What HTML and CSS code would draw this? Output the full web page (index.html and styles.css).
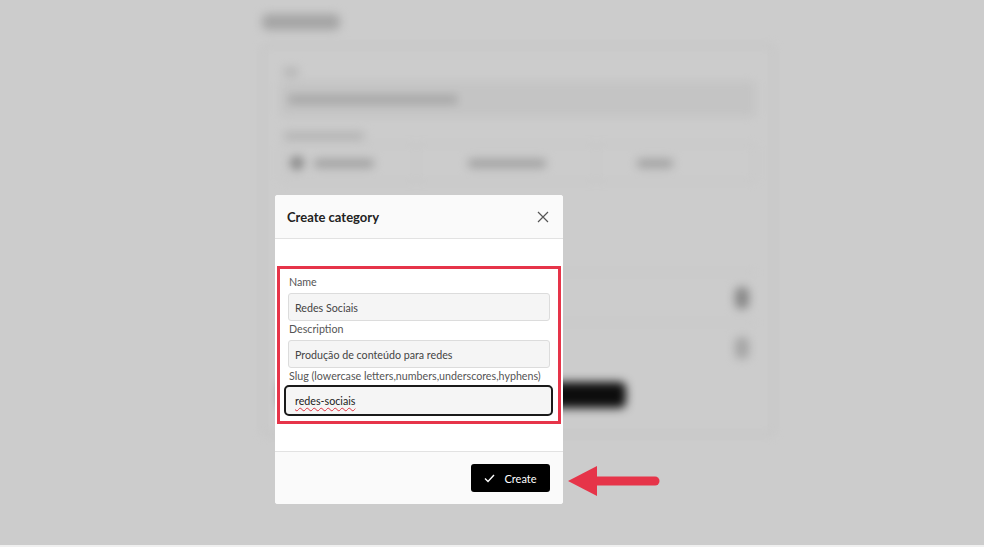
FILE: index.html
```html
<!DOCTYPE html>
<html lang="en">
<head>
    <meta charset="UTF-8">
    <meta name="viewport" content="width=device-width, initial-scale=1.0">
    <title>Create category</title>
    <link rel="stylesheet" href="styles.css">
</head>
<body>
    <!-- page behind the modal (blurred) -->
    <div class="page">
        <div class="page-title"></div>
        <div class="card">
            <div class="small-label"></div>
            <div class="fake-input"><span class="fake-text"></span></div>

            <div class="small-label wide"></div>
            <div class="tabs">
                <div class="tab first"><span class="dot"></span><span class="tab-text"></span></div>
                <div class="tab"><span class="tab-text long"></span></div>
                <div class="tab last"><span class="tab-text short"></span></div>
            </div>

            <div class="rows">
                <div class="row"><span class="row-icon"></span></div>
                <div class="row"><span class="row-icon faint"></span></div>
            </div>

            <div class="dark-btn"></div>
        </div>
    </div>

    <div class="backdrop">
        <div class="modal">
            <div class="modal-header">
                <div class="modal-title">Create category</div>
                <svg class="close" width="12" height="12" viewBox="0 0 12 12">
                    <path d="M1 1 L11 11 M11 1 L1 11" stroke="#555" stroke-width="1.2" fill="none"/>
                </svg>
            </div>

            <div class="modal-body">
                <div class="highlight">
                    <div class="label">Name</div>
                    <div class="input">Redes Sociais</div>
                    <div class="label">Description</div>
                    <div class="input">Produção de conteúdo para redes</div>
                    <div class="label slug">Slug (lowercase letters,numbers,underscores,hyphens)</div>
                    <div class="input focused"><span class="misspelled">redes-sociais</span></div>
                </div>
            </div>

            <div class="modal-footer">
                <button class="create-btn">
                    <svg width="11" height="9" viewBox="0 0 11 9">
                        <path d="M1 4.5 L4 7.5 L10 1" stroke="#fff" stroke-width="1.4" fill="none"/>
                    </svg>
                    Create
                </button>
            </div>
        </div>

        <svg class="arrow" width="94" height="34" viewBox="0 0 94 34">
            <path d="M2 17 L31 2 L31 32 Z" fill="#e63449"/>
            <line x1="28" y1="17" x2="89" y2="17" stroke="#e63449" stroke-width="9" stroke-linecap="round"/>
        </svg>
    </div>
</body>
</html>
```

FILE: styles.css
```css
* {
    margin: 0;
    padding: 0;
    box-sizing: border-box;
}

html {
    background: #f0f0f0;
}

body {
    font-family: 'Lato', 'Liberation Sans', sans-serif;
    background: #fff;
    height: 545px;
    overflow: hidden;
    position: relative;
}

/* ---------- background page ---------- */

.page {
    width: 512px;
    margin-left: 262px;
    padding-top: 10px;
    filter: blur(5px);
}

.page-title {
    width: 78px;
    height: 16px;
    margin-top: 4px;
    background: #cfcfcf;
    border-radius: 6px;
}

.card {
    margin-top: 15px;
    height: 390px;
    border: 1px solid #e2e2e2;
    border-radius: 4px;
    padding: 22px 18px;
}

.small-label {
    width: 14px;
    height: 8px;
    background: #e0e0e0;
    border-radius: 3px;
    margin-left: 3px;
}

.small-label.wide {
    width: 80px;
    margin-top: 16px;
}

.fake-input {
    margin-top: 6px;
    height: 34px;
    background: #f6f6f6;
    border: 1px solid #ececec;
    border-radius: 4px;
    display: flex;
    align-items: center;
    padding-left: 6px;
}

.fake-text {
    width: 170px;
    height: 9px;
    background: #d0d0d0;
    border-radius: 4px;
}

.tabs {
    margin-top: 4px;
    height: 38px;
    display: flex;
    border: 1px solid #eee;
    border-radius: 4px;
}

.tab {
    display: flex;
    align-items: center;
    justify-content: center;
    gap: 10px;
    border-right: 1px solid #eee;
    width: 180px;
}

.tab.first {
    width: 135px;
    justify-content: flex-start;
    padding-left: 8px;
}

.tab.last {
    flex: 1;
    border-right: none;
    justify-content: flex-start;
    padding-left: 40px;
}

.dot {
    width: 14px;
    height: 14px;
    border-radius: 50%;
    background: #aaa;
}

.tab-text {
    width: 60px;
    height: 9px;
    background: #cacaca;
    border-radius: 4px;
}

.tab-text.long {
    width: 78px;
}

.tab-text.short {
    width: 36px;
}

.rows {
    margin-top: 90px;
}

.row {
    height: 50px;
    border-top: 1px solid #eee;
    display: flex;
    align-items: center;
    justify-content: flex-end;
    padding-right: 6px;
}

.row-icon {
    width: 14px;
    height: 22px;
    border-radius: 6px;
    background: #aaa;
}

.row-icon.faint {
    background: #cfcfcf;
}

.dark-btn {
    margin-top: 10px;
    width: 345px;
    height: 26px;
    background: #111;
    border-radius: 6px;
}

/* ---------- overlay + modal ---------- */

.backdrop {
    position: absolute;
    top: 0;
    left: 0;
    width: 100%;
    height: 545px;
    background: rgba(0, 0, 0, 0.2);
    padding: 195px 0 0 275px;
    display: flex;
    align-items: flex-start;
}

.modal {
    width: 288px;
    background: #fff;
    border-radius: 3px;
    overflow: hidden;
}

.modal-header {
    height: 44px;
    background: #fafafa;
    border-bottom: 1px solid #e2e2e2;
    display: flex;
    align-items: center;
    justify-content: space-between;
    padding: 0 14px 0 12px;
}

.modal-title {
    font-size: 13px;
    font-weight: bold;
    color: #222;
}

.modal-body {
    padding: 27px 2px 27px;
}

.highlight {
    border: 3px solid #e63449;
    padding: 5px 8px 5px 8px;
}

.label {
    font-size: 10.7px;
    color: #555;
    line-height: 16px;
    margin: 0 0 3px 1px;
}

.label.slug {
    margin-bottom: 1px;
}

.input {
    height: 28px;
    background: #f5f5f5;
    border: 1px solid #dcdcdc;
    border-radius: 3px;
    font-size: 10.7px;
    color: #444;
    display: flex;
    align-items: center;
    padding-left: 6px;
}

.input.focused {
    height: 31px;
    margin: 0 -3px 0 -4px;
    border: 2px solid #1a1a1a;
    border-radius: 5px;
    padding-left: 9px;
    color: #222;
}

.misspelled {
    text-decoration: underline wavy #e0303e;
    text-decoration-thickness: 1px;
    text-underline-offset: 2px;
}

.modal-footer {
    height: 53px;
    background: #fafafa;
    border-top: 1px solid #e2e2e2;
    display: flex;
    align-items: center;
    justify-content: flex-end;
    padding-right: 13px;
}

.create-btn {
    width: 79px;
    height: 28px;
    background: #000;
    color: #fff;
    border: none;
    border-radius: 3px;
    font-family: 'Lato', 'Liberation Sans', sans-serif;
    font-size: 11px;
    display: flex;
    align-items: center;
    justify-content: center;
    gap: 9px;
}

.arrow {
    margin: 269px 0 0 3px;
}
```
